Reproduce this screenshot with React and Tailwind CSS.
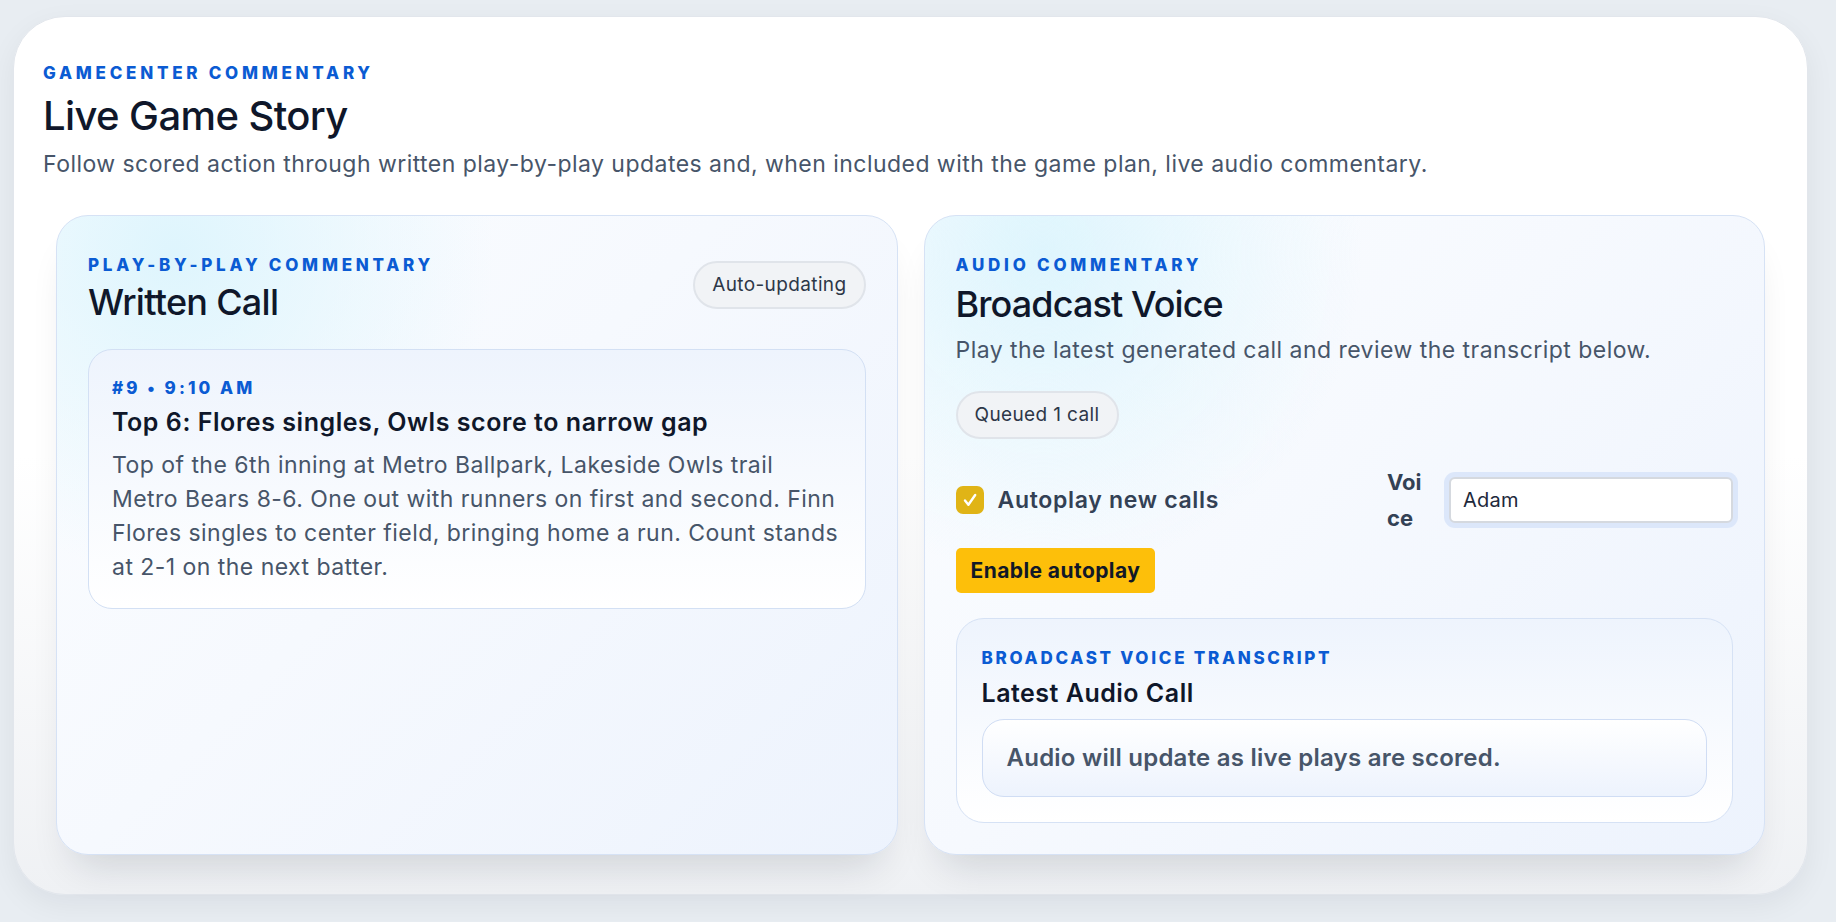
const Eyebrow = ({ children, className = '' }) => (
  <p className={`text-[17px] font-extrabold uppercase leading-6 tracking-[0.22em] text-[#0b5bd3] ${className}`}>{children}</p>
);

const Pill = ({ children, className = '' }) => (
  <span
    className={`inline-flex h-[48px] items-center rounded-full border-2 border-[#e0e4ea] bg-[#f1f3f6] px-[17px] text-[19px] tracking-[0.02em] text-[#2d3748] ${className}`}
  >
    {children}
  </span>
);

const panelClass =
  'rounded-[32px] border border-[#d6e2f5] bg-[radial-gradient(circle_at_14%_6%,#def5fd_0,rgba(222,245,253,0)_34%),linear-gradient(135deg,#fbfdff_0%,#f6f9fe_45%,#edf3fd_100%)] px-[31px] pt-[37px] pb-[31px] shadow-[0_26px_40px_-18px_rgba(15,23,42,0.16)]';

const WrittenCall = () => (
  <section className={panelClass}>
    <div className="flex items-start justify-between">
      <div>
        <Eyebrow>Play-by-play commentary</Eyebrow>
        <h2 className="mt-[3px] text-[36px] font-medium leading-[44px] tracking-[-0.02em] text-[#0f172a]">Written Call</h2>
      </div>
      <Pill className="mt-2">Auto-updating</Pill>
    </div>

    <article className="mt-[25px] rounded-[24px] border border-[#d3e0f4] bg-gradient-to-b from-[#eef4fd] to-white px-[23px] pt-[26px] pb-[24px]">
      <p className="text-[17px] font-extrabold leading-6 tracking-[0.18em] text-[#0b5bd3]">#9 • 9:10 AM</p>
      <h3 className="mt-[6px] text-[25px] font-semibold leading-8 tracking-[0.022em] text-[#0f172a]">
        Top 6: Flores singles, Owls score to narrow gap
      </h3>
      <p className="mt-[10px] text-[23px] leading-[34px] tracking-[0.02em] text-[#475569]">
        Top of the 6th inning at Metro Ballpark, Lakeside Owls trail Metro Bears 8-6. One out with runners on first
        and second. Finn Flores singles to center field, bringing home a run. Count stands at 2-1 on the next batter.
      </p>
    </article>
  </section>
);

const BroadcastVoice = () => (
  <section className={panelClass}>
    <Eyebrow>Audio commentary</Eyebrow>
    <h2 className="mt-[5px] text-[36px] font-medium leading-[44px] tracking-[-0.025em] text-[#0f172a]">Broadcast Voice</h2>
    <p className="mt-[8px] text-[23px] leading-8 tracking-[0.02em] text-[#475569]">
      Play the latest generated call and review the transcript below.
    </p>

    <Pill className="mt-[25px]">Queued 1 call</Pill>

    <div className="mt-[25px] flex items-center justify-between">
      <label className="flex items-center gap-[14px]">
        <span className="flex h-[28px] w-[28px] items-center justify-center rounded-[7px] bg-[#e0b416]">
          <svg width="20" height="20" viewBox="0 0 20 20" fill="none">
            <path d="M5 10.5l3.4 4.2L15.2 5" stroke="white" strokeWidth="2.4" strokeLinecap="round" strokeLinejoin="round" />
          </svg>
        </span>
        <span className="text-[23px] font-semibold tracking-[0.03em] text-[#334155]">Autoplay new calls</span>
      </label>

      <div className="flex items-center">
        <span className="w-[40px] break-all text-[22px] font-bold leading-9 text-[#334155]">Voice</span>
        <input
          readOnly
          value="Adam"
          className="ml-[22px] h-[46px] w-[284px] rounded-[6px] border-2 border-[#d5d9df] bg-white px-[12px] text-[20px] tracking-[0.01em] text-[#1e293b] shadow-[0_0_0_5px_#dce7fa] outline-none"
        />
      </div>
    </div>

    <button className="mt-[12px] h-[45px] rounded-[5px] bg-[#fdbf0a] px-[15px] text-[21px] font-bold tracking-[0.02em] text-[#111827]">
      Enable autoplay
    </button>

    <div className="mt-[25px] rounded-[28px] border border-[#d6e2f5] bg-gradient-to-b from-[#eef4fd] to-white px-[25px] pt-[27px] pb-[25px]">
      <p className="text-[17px] font-extrabold uppercase leading-6 tracking-[0.16em] text-[#0b5bd3]">
        Broadcast voice transcript
      </p>
      <h3 className="mt-[7px] text-[25px] font-semibold leading-8 tracking-[0.02em] text-[#0f172a]">Latest Audio Call</h3>
      <div className="mt-[10px] rounded-[22px] border border-[#d0ddf4] bg-gradient-to-b from-white to-[#edf3fd] px-[24px] py-[22px]">
        <p className="text-[24px] font-semibold leading-8 tracking-[0.01em] text-[#475569]">
          Audio will update as live plays are scored.
        </p>
      </div>
    </div>
  </section>
);

export default function App() {
  return (
    <div className="min-h-screen bg-[#e8edf2] pt-4 pr-[28px] pb-[29px] pl-[13px] font-['Inter','Noto_Sans',sans-serif]">
      <div className="rounded-[52px] border border-[#e2e6ec] bg-gradient-to-b from-white via-white to-[#eff1f4] pt-[44px] pr-[29px] pb-[39px] pl-[29px] shadow-[0_10px_30px_rgba(15,23,42,0.06)]">
        <header>
          <Eyebrow className="tracking-[0.2em]">Gamecenter commentary</Eyebrow>
          <h1 className="mt-[7px] text-[40px] font-medium leading-[48px] tracking-[-0.015em] text-[#0f172a]">
            Live Game Story
          </h1>
          <p className="mt-[8px] text-[23px] leading-8 tracking-[0.02em] text-[#475569]">
            Follow scored action through written play-by-play updates and, when included with the game plan, live audio
            commentary.
          </p>
        </header>

        <div className="mt-[35px] mx-[13px] grid grid-cols-2 gap-[26px]">
          <WrittenCall />
          <BroadcastVoice />
        </div>
      </div>
    </div>
  );
}
